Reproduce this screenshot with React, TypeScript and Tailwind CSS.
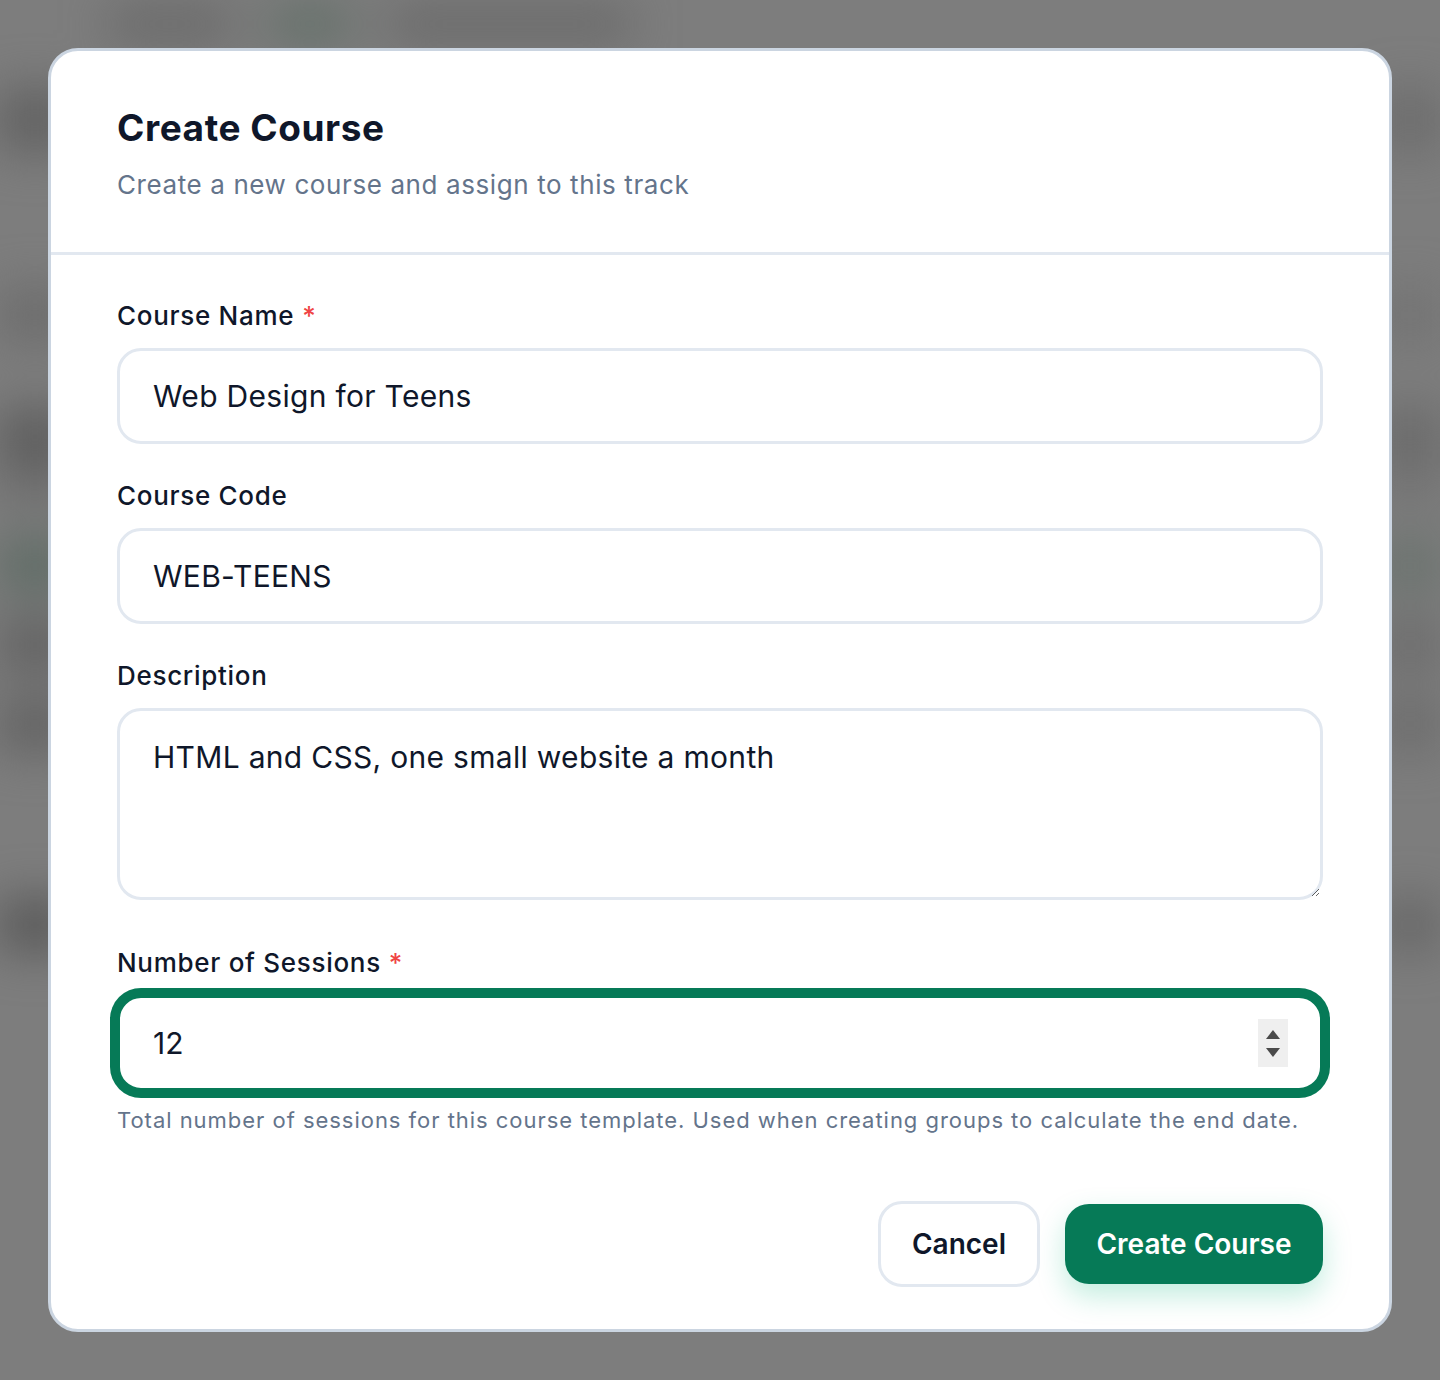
import { useState } from "react"

const rows = [
  { h: 60, mt: 100, color: "bg-[#5f5f5f]" },
  { h: 50, mt: 190, color: "bg-[#6a6a6a]" },
  { h: 50, mt: 120, color: "bg-[#5a5a5a]" },
  { h: 40, mt: 50, color: "bg-[#6c6c6c]" },
  { h: 50, mt: 90, color: "bg-[#5c6a63]" },
  { h: 50, mt: 80, color: "bg-[#5f5f5f]" },
  { h: 50, mt: 80, color: "bg-[#5f5f5f]" },
  { h: 50, mt: 200, color: "bg-[#555555]" },
]

function Backdrop() {
  return (
    <div className="h-[1380px] overflow-hidden bg-[#7d7d7d]">
      <div className="blur-xl">
        <div className="flex h-[40px] items-center gap-10 px-[110px] pt-2">
          <div className="h-6 w-[120px] bg-[#5f5f5f]" />
          <div className="h-6 w-[80px] bg-[#55695e]" />
          <div className="h-6 w-[240px] bg-[#5f5f5f]" />
        </div>
        {rows.map((r, i) => (
          <div key={i} className="flex items-center gap-8" style={{ marginTop: r.mt - 50 }}>
            <div className={`w-[70px] ${r.color}`} style={{ height: r.h }} />
            <div className="flex-1" />
            <div className={`w-[60px] opacity-60 ${r.color}`} style={{ height: r.h }} />
          </div>
        ))}
      </div>
    </div>
  )
}

function Label({ text, required }: { text: string; required?: boolean }) {
  return (
    <label className="block text-[26px] font-medium leading-[36px] tracking-[0.027em] text-[#0f172a]">
      {text}
      {required && <span className="ml-[8px] text-[#ef4444]">*</span>}
    </label>
  )
}

export default function App() {
  const [name, setName] = useState("Web Design for Teens")
  const [code, setCode] = useState("WEB-TEENS")
  const [desc, setDesc] = useState("HTML and CSS, one small website a month")
  const [sessions, setSessions] = useState(12)

  const inputCls =
    "mt-[14px] block h-[96px] w-full rounded-[24px] border-[3px] border-[#e2e8f0] bg-white px-[33px] text-[30px] tracking-[0.01em] text-[#0f172a] outline-none"

  return (
    <div className="relative font-['Inter','Noto_Sans',sans-serif]">
      <Backdrop />
      <div className="absolute left-[48px] top-[48px] w-[1344px] overflow-hidden rounded-[30px] border-[3px] border-[#cbd5e1] bg-white">
        <div className="border-b-[3px] border-[#e2e8f0] px-[66px] pb-[49px] pt-[57px]">
          <h2 className="text-[37px] font-bold leading-[40px] tracking-[0.015em] text-[#0f172a]">Create Course</h2>
          <p className="mt-[19px] text-[26px] leading-[36px] tracking-[0.023em] text-[#64748b]">
            Create a new course and assign to this track
          </p>
        </div>

        <div className="flex flex-col px-[66px] pb-[42px] pt-[43px]">
          <div>
            <Label text="Course Name" required />
            <input className={inputCls} value={name} onChange={(e) => setName(e.target.value)} />
          </div>
          <div className="mt-[34px]">
            <Label text="Course Code" />
            <input className={inputCls} value={code} onChange={(e) => setCode(e.target.value)} />
          </div>
          <div className="mt-[34px]">
            <Label text="Description" />
            <textarea
              className="mt-[14px] block h-[192px] w-full rounded-[24px] border-[3px] border-[#e2e8f0] bg-white px-[33px] py-[26px] text-[30px] leading-[40px] tracking-[0.01em] text-[#0f172a] outline-none"
              value={desc}
              onChange={(e) => setDesc(e.target.value)}
            />
          </div>
          <div className="mt-[45px]">
            <Label text="Number of Sessions" required />
            <div className="mt-[14px] flex h-[96px] items-center rounded-[24px] border-[3px] border-[#067a57] bg-white pl-[33px] pr-[32px] ring-[7px] ring-[#067a57]">
              <input
                className="h-full flex-1 bg-transparent text-[30px] text-[#0f172a] outline-none"
                value={sessions}
                onChange={(e) => setSessions(Number(e.target.value) || 0)}
              />
              <div className="flex h-[48px] w-[30px] flex-col items-center justify-center gap-[9px] bg-[#efefef]">
                <button onClick={() => setSessions(sessions + 1)} className="h-0 w-0 border-x-[7px] border-b-[9px] border-x-transparent border-b-[#4a4a4a]" />
                <button onClick={() => setSessions(Math.max(0, sessions - 1))} className="h-0 w-0 border-x-[7px] border-t-[9px] border-x-transparent border-t-[#4a4a4a]" />
              </div>
            </div>
            <p className="mt-[13px] text-[22px] leading-[32px] tracking-[0.044em] text-[#64748b]">
              Total number of sessions for this course template. Used when creating groups to calculate the end date.
            </p>
          </div>

          <div className="mt-[65px] flex items-center justify-end gap-[25px]">
            <button className="h-[86px] w-[162px] rounded-[24px] border-[3px] border-[#e2e8f0] bg-white text-[28px] font-semibold text-[#0f172a]">
              Cancel
            </button>
            <button className="h-[80px] w-[258px] rounded-[24px] bg-[#067a57] text-[28px] font-semibold text-white shadow-[0_12px_28px_rgba(16,185,129,0.25)]">
              Create Course
            </button>
          </div>
        </div>
      </div>
    </div>
  )
}
